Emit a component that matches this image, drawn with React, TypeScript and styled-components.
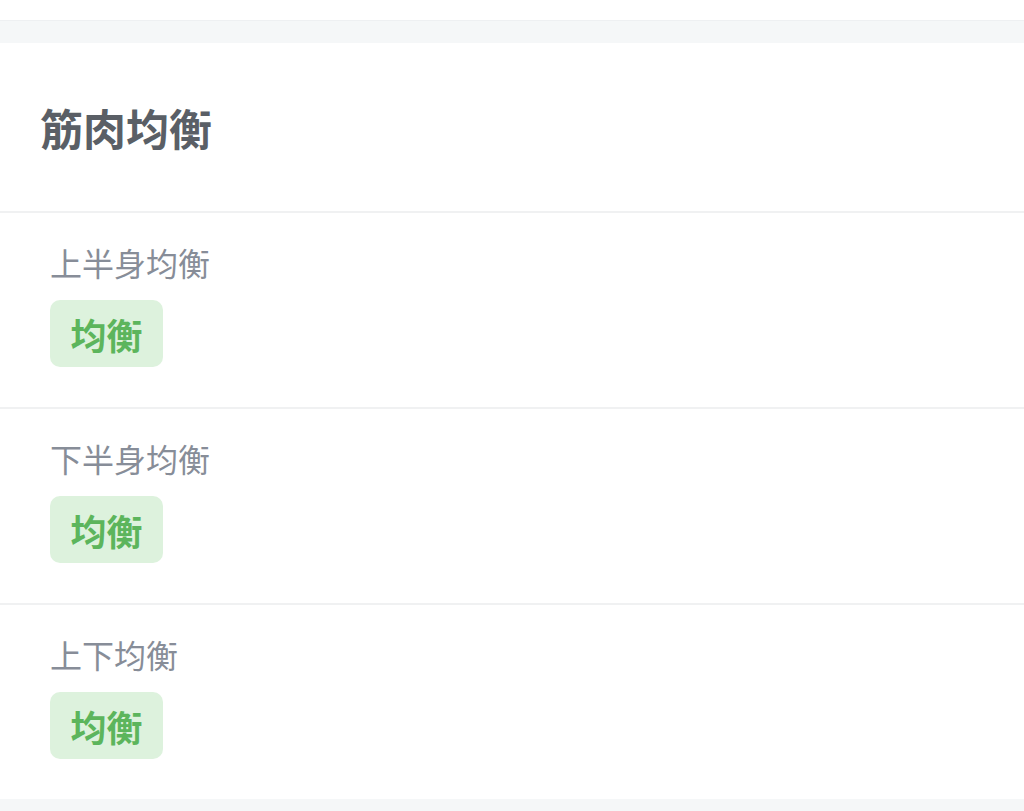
import React from "react";
import styled, { createGlobalStyle } from "styled-components";

const Global = createGlobalStyle`
  html, body { margin: 0; padding: 0; background: #ffffff; }
  body { font-family: "Noto Sans CJK SC", "Noto Sans", sans-serif; }
`;

const Page = styled.div`
  display: flex;
  flex-direction: column;
  width: 1024px;
  height: 811px;
  overflow: hidden;
  background: #ffffff;
`;

const TopStrip = styled.div`
  height: 20px;
  background: #ffffff;
`;

const Gap = styled.div`
  height: 23px;
  background: #f5f7f8;
  border-top: 1px solid #eef0f2;
  box-sizing: border-box;
`;

const Card = styled.section`
  display: flex;
  flex-direction: column;
  background: #ffffff;
`;

const Header = styled.div`
  height: 168px;
  display: flex;
  align-items: center;
  padding: 0 40px;
  border-bottom: 2px solid #f0f1f2;
`;

const Title = styled.h2`
  margin: 0;
  font-size: 43px;
  font-weight: 700;
  color: #5a5f66;
  line-height: 1;
`;

const Row = styled.div<{ $last?: boolean }>`
  display: flex;
  flex-direction: column;
  align-items: flex-start;
  gap: 16px;
  padding: 27px 50px 40px;
  border-bottom: ${(p) => (p.$last ? "none" : "2px solid #f0f1f2")};
`;

const Label = styled.div`
  font-size: 32px;
  line-height: 44px;
  color: #878d98;
`;

const Badge = styled.span`
  display: inline-flex;
  align-items: center;
  justify-content: center;
  width: 113px;
  height: 67px;
  border-radius: 10px;
  background: #ddf2dd;
  color: #5cb55c;
  font-size: 36px;
  font-weight: 700;
`;

const Bottom = styled.div`
  flex: 1;
  background: #f5f7f8;
`;

const rows = [
  { label: "上半身均衡", status: "均衡" },
  { label: "下半身均衡", status: "均衡" },
  { label: "上下均衡", status: "均衡" },
];

export default function App() {
  return (
    <Page>
      <Global />
      <TopStrip />
      <Gap />
      <Card>
        <Header>
          <Title>筋肉均衡</Title>
        </Header>
        {rows.map((r, i) => (
          <Row key={r.label} $last={i === rows.length - 1}>
            <Label>{r.label}</Label>
            <Badge>{r.status}</Badge>
          </Row>
        ))}
      </Card>
      <Bottom />
    </Page>
  );
}
